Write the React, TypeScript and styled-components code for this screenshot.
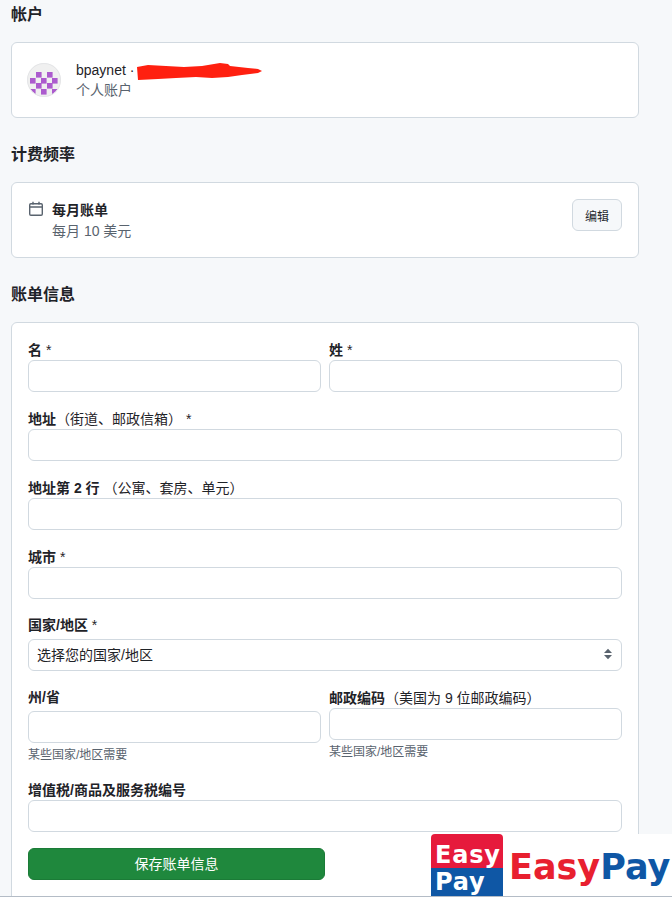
import React from "react"
import styled, { createGlobalStyle } from "styled-components"

const GlobalStyle = createGlobalStyle`
    html, body {
        margin: 0;
        padding: 0;
        height: 897px;
        overflow: hidden;
        background: #f6f8fa;
        color: #1f2328;
        font-family: "Liberation Sans", "Noto Sans CJK SC", sans-serif;
        font-size: 14px;
    }
    * { box-sizing: border-box; }
`
const Page = styled.div`
    position: relative;
    width: 672px;
    height: 897px;
    padding-left: 11px;
    overflow: hidden;
    border-bottom: 1px solid #b4bcc6;
`
const Column = styled.div`
    width: 628px;
`
const Heading = styled.h2`
    margin: 0;
    height: 28px;
    padding-top: 1px;
    font-size: 16px;
    line-height: 28px;
    font-weight: 600;
    &:not(:first-child) { margin-top: 22px; }
`
const Card = styled.section`
    margin-top: 14px;
    background: #fff;
    border: 1px solid #d1d9e0;
    border-radius: 6px;
`
const AccountCard = styled(Card)`
    display: flex;
    align-items: center;
    height: 76px;
    padding: 0 15px;
    gap: 15px;
`
const Avatar = styled.svg`
    width: 34px;
    height: 34px;
    flex: none;
`
const Lines = styled.div`
    display: flex;
    flex-direction: column;
`
const NameRow = styled.div`
    display: flex;
    align-items: center;
    height: 19px;
    font-size: 14px;
    gap: 2px;
`
const Scribble = styled.svg`
    width: 126px;
    height: 19px;
    flex: none;
    margin-top: 2px;
`
const Muted = styled.div`
    font-size: 14px;
    line-height: 20px;
    color: #59636e;
`
const BillingCard = styled(Card)`
    display: flex;
    align-items: flex-start;
    justify-content: space-between;
    height: 76px;
    padding: 16px;
`
const BillingInfo = styled.div`
    display: flex;
    align-items: flex-start;
    gap: 8px;
`
const CalendarIcon = styled.svg`
    width: 16px;
    height: 16px;
    flex: none;
    margin-top: 2px;
    color: #59636e;
`
const Strong = styled.div`
    font-size: 14px;
    line-height: 22px;
    font-weight: 600;
`
const EditButton = styled.button`
    width: 50px;
    height: 32px;
    padding: 0;
    background: #f6f8fa;
    border: 1px solid #d1d9e0;
    border-radius: 6px;
    color: #25292e;
    font: inherit;
    font-size: 12px;
`
const FormCard = styled(Card)`
    height: 620px;
    padding: 16px;
    border-bottom-left-radius: 0;
    border-bottom-right-radius: 0;
`
const Field = styled.div`
    margin-bottom: 16px;
`
const Label = styled.label`
    display: block;
    height: 21px;
    font-size: 14px;
    line-height: 22px;
    font-weight: 600;
    white-space: nowrap;
    span { font-weight: 400; }
`
const TallLabel = styled(Label)`
    height: 24px;
    line-height: 21px;
`
const Input = styled.input`
    display: block;
    width: 100%;
    height: 32px;
    padding: 0 8px;
    background: #fff;
    border: 1px solid #d1d9e0;
    border-radius: 6px;
    outline: none;
`
const SelectBox = styled.div`
    display: flex;
    align-items: center;
    justify-content: space-between;
    height: 32px;
    padding: 0 8px 2px;
    background: #fff;
    border: 1px solid #d1d9e0;
    border-radius: 6px;
    font-size: 14px;
`
const Chevrons = styled.svg`
    width: 10px;
    height: 12px;
    color: #59636e;
`
const Pair = styled.div`
    display: grid;
    grid-template-columns: 293px 293px;
    gap: 8px;
    margin-bottom: 16px;
`
const Hint = styled.div`
    margin-top: 5px;
    font-size: 12px;
    line-height: 15px;
    color: #59636e;
`
const SaveButton = styled.button`
    display: block;
    width: 297px;
    height: 32px;
    padding: 0 0 2px;
    background: #1f883d;
    border: 1px solid #1b7b37;
    border-radius: 6px;
    color: #fff;
    font: inherit;
    font-size: 14px;
`
const Watermark = styled.div`
    position: absolute;
    right: 0;
    bottom: -1px;
    width: 241px;
    height: 63px;
    display: flex;
    align-items: center;
    gap: 6px;
    background: #fff;
    font-family: "DejaVu Sans", "Liberation Sans", sans-serif;
    font-weight: 700;
`
const Badge = styled.div`
    width: 72px;
    height: 63px;
    flex: none;
    display: grid;
    grid-template-rows: 34px 29px;
    border-radius: 4px 4px 0 0;
    overflow: hidden;
    color: #fff;
    font-size: 24px;
    line-height: 1;
`
const BadgeRow = styled.div<{ $bg: string; $pad: number }>`
    display: flex;
    align-items: flex-end;
    padding: 0 0 ${props => props.$pad}px 4px;
    background: ${props => props.$bg};
    letter-spacing: 0.8px;
`
const Wordmark = styled.div`
    margin-top: 3px;
    font-size: 35px;
    line-height: 60px;
    white-space: nowrap;
`
const WordRed = styled.span`
    color: #e8202f;
`
const WordBlue = styled.span`
    color: #0f57a5;
`

const cells = [
    [9, 9], [20, 9],
    [3, 15], [14, 15], [25, 15],
    [9, 20], [20, 20],
    [3, 26], [14, 26], [25, 26],
]

const App = () => {
    return (
        <Page>
            <GlobalStyle />
            <Column>
                <Heading>帐户</Heading>
                <AccountCard>
                    <Avatar viewBox="0 0 34 34">
                        <defs>
                            <clipPath id="round">
                                <circle cx="17" cy="17" r="16.5" />
                            </clipPath>
                        </defs>
                        <circle cx="17" cy="17" r="17" fill="#f0f0f0" />
                        <g clipPath="url(#round)" fill="#ac5bce">
                            {cells.map(([x, y]) => <rect key={`${x}-${y}`} x={x} y={y} width="5.6" height="5.6" />)}
                        </g>
                        <circle cx="17" cy="17" r="16.5" fill="none" stroke="#e4e5e7" />
                    </Avatar>
                    <Lines>
                        <NameRow>
                            bpaynet ·
                            <Scribble viewBox="0 0 126 19">
                                <path d="M1 5 L12 3 L30 4 L48 5 L66 4 L84 1 L92 2 L94 4 L112 6 L122 7 L126 9 L122 11 L106 13 L92 15 L76 16 L60 15 L40 16 L22 17 L2 18 Z" fill="#ff2010" />
                            </Scribble>
                        </NameRow>
                        <Muted>个人账户</Muted>
                    </Lines>
                </AccountCard>

                <Heading>计费频率</Heading>
                <BillingCard>
                    <BillingInfo>
                        <CalendarIcon viewBox="0 0 16 16" fill="none" stroke="currentColor" strokeWidth="1.4">
                            <rect x="1.7" y="2.7" width="12.6" height="11.6" rx="1.2" />
                            <path d="M1.7 6h12.6M5 .8v2.6M11 .8v2.6" />
                        </CalendarIcon>
                        <Lines>
                            <Strong>每月账单</Strong>
                            <Muted>每月 10 美元</Muted>
                        </Lines>
                    </BillingInfo>
                    <EditButton>编辑</EditButton>
                </BillingCard>

                <Heading>账单信息</Heading>
                <FormCard>
                    <Pair>
                        <div>
                            <Label>名 <span>*</span></Label>
                            <Input />
                        </div>
                        <div>
                            <Label>姓 <span>*</span></Label>
                            <Input />
                        </div>
                    </Pair>
                    <Field>
                        <Label>地址<span>（街道、邮政信箱） *</span></Label>
                        <Input />
                    </Field>
                    <Field>
                        <Label>地址第 2 行 <span>（公寓、套房、单元）</span></Label>
                        <Input />
                    </Field>
                    <Field>
                        <Label>城市 <span>*</span></Label>
                        <Input />
                    </Field>
                    <Field>
                        <TallLabel>国家/地区 <span>*</span></TallLabel>
                        <SelectBox>
                            选择您的国家/地区
                            <Chevrons viewBox="0 0 10 12" fill="currentColor">
                                <path d="M5 .8 9 5H1zM5 11.2 1 7h8z" />
                            </Chevrons>
                        </SelectBox>
                    </Field>
                    <Pair>
                        <div>
                            <TallLabel>州/省</TallLabel>
                            <Input />
                            <Hint>某些国家/地区需要</Hint>
                        </div>
                        <div>
                            <Label>邮政编码<span>（美国为 9 位邮政编码）</span></Label>
                            <Input />
                            <Hint>某些国家/地区需要</Hint>
                        </div>
                    </Pair>
                    <Field>
                        <Label>增值税/商品及服务税编号</Label>
                        <Input />
                    </Field>
                    <SaveButton>保存账单信息</SaveButton>
                </FormCard>
            </Column>
            <Watermark>
                <Badge>
                    <BadgeRow $bg="#e61a3c" $pad={1}>Easy</BadgeRow>
                    <BadgeRow $bg="#0f57a5" $pad={3}>Pay</BadgeRow>
                </Badge>
                <Wordmark><WordRed>Easy</WordRed><WordBlue>Pay</WordBlue></Wordmark>
            </Watermark>
        </Page>
    )
}
export default App
